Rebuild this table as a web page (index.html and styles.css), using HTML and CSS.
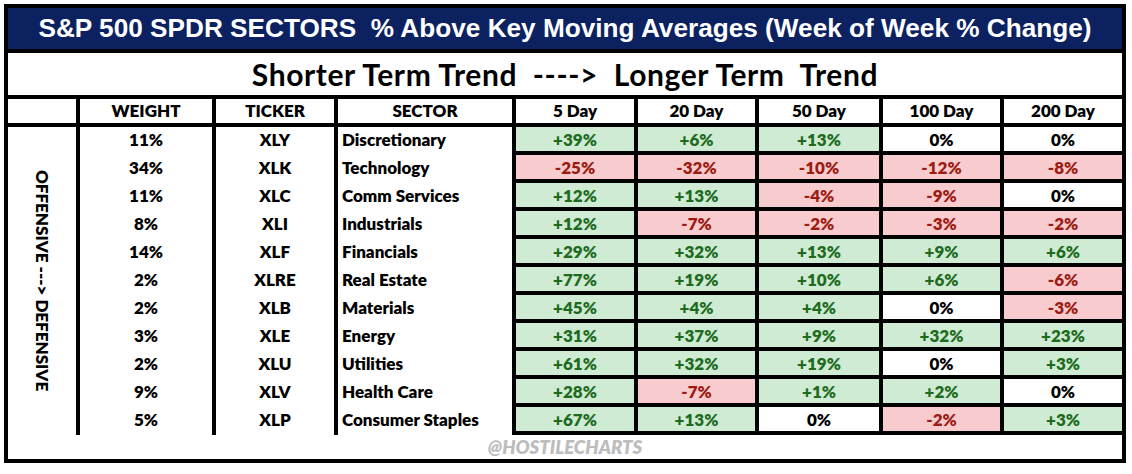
FILE: index.html
```html
<!DOCTYPE html>
<html>
<head>
<meta charset="utf-8">
<link rel="stylesheet" href="styles.css">
</head>
<body>
<div class="board">
  <div class="title">S&amp;P 500 SPDR SECTORS&nbsp; % Above Key Moving Averages (Week of Week % Change)</div>
  <div class="subtitle">Shorter Term Trend&nbsp; ----&gt;&nbsp; Longer Term&nbsp; Trend</div>
  <div class="grid">
    <div class="hd"></div>
    <div class="hd">WEIGHT</div>
    <div class="hd">TICKER</div>
    <div class="hd">SECTOR</div>
    <div class="hd">5 Day</div>
    <div class="hd">20 Day</div>
    <div class="hd">50 Day</div>
    <div class="hd">100 Day</div>
    <div class="hd">200 Day</div>

    <div class="side"><span>OFFENSIVE ---&gt; DEFENSIVE</span></div>

    <div class="c">11%</div><div class="c">XLY</div><div class="c sec">Discretionary</div>
    <div class="v up">+39%</div><div class="v up">+6%</div><div class="v up">+13%</div><div class="v">0%</div><div class="v">0%</div>

    <div class="c">34%</div><div class="c">XLK</div><div class="c sec">Technology</div>
    <div class="v dn">-25%</div><div class="v dn">-32%</div><div class="v dn">-10%</div><div class="v dn">-12%</div><div class="v dn">-8%</div>

    <div class="c">11%</div><div class="c">XLC</div><div class="c sec">Comm Services</div>
    <div class="v up">+12%</div><div class="v up">+13%</div><div class="v dn">-4%</div><div class="v dn">-9%</div><div class="v">0%</div>

    <div class="c">8%</div><div class="c">XLI</div><div class="c sec">Industrials</div>
    <div class="v up">+12%</div><div class="v dn">-7%</div><div class="v dn">-2%</div><div class="v dn">-3%</div><div class="v dn">-2%</div>

    <div class="c">14%</div><div class="c">XLF</div><div class="c sec">Financials</div>
    <div class="v up">+29%</div><div class="v up">+32%</div><div class="v up">+13%</div><div class="v up">+9%</div><div class="v up">+6%</div>

    <div class="c">2%</div><div class="c">XLRE</div><div class="c sec">Real Estate</div>
    <div class="v up">+77%</div><div class="v up">+19%</div><div class="v up">+10%</div><div class="v up">+6%</div><div class="v dn">-6%</div>

    <div class="c">2%</div><div class="c">XLB</div><div class="c sec">Materials</div>
    <div class="v up">+45%</div><div class="v up">+4%</div><div class="v up">+4%</div><div class="v">0%</div><div class="v dn">-3%</div>

    <div class="c">3%</div><div class="c">XLE</div><div class="c sec">Energy</div>
    <div class="v up">+31%</div><div class="v up">+37%</div><div class="v up">+9%</div><div class="v up">+32%</div><div class="v up">+23%</div>

    <div class="c">2%</div><div class="c">XLU</div><div class="c sec">Utilities</div>
    <div class="v up">+61%</div><div class="v up">+32%</div><div class="v up">+19%</div><div class="v">0%</div><div class="v up">+3%</div>

    <div class="c">9%</div><div class="c">XLV</div><div class="c sec">Health Care</div>
    <div class="v up">+28%</div><div class="v dn">-7%</div><div class="v up">+1%</div><div class="v up">+2%</div><div class="v">0%</div>

    <div class="c">5%</div><div class="c">XLP</div><div class="c sec">Consumer Staples</div>
    <div class="v up">+67%</div><div class="v up">+13%</div><div class="v">0%</div><div class="v dn">-2%</div><div class="v up">+3%</div>
  </div>
  <div class="footer">@HOSTILECHARTS</div>
</div>
</body>
</html>
```

FILE: styles.css
```css
* { box-sizing: border-box; }
html, body { margin: 0; padding: 0; background: #ffffff; }
body { padding: 4px 6px 11px 4px; }

.board {
  width: 1122px;
  border: 4px solid #000;
  background: #000;
  font-family: Lato, "Noto Sans", sans-serif;
  font-weight: 800;
  color: #000;
}

.title {
  height: 41px;
  background: #0c2260;
  color: #fff;
  font-family: "Liberation Sans", Arial, sans-serif;
  font-weight: 700;
  font-size: 26.2px;
  line-height: 41px;
  text-align: center;
  margin-bottom: 4px;
  white-space: nowrap;
}

.subtitle {
  height: 42px;
  background: #fff;
  font-size: 30px;
  font-weight: 700;
  letter-spacing: 0.6px;
  line-height: 42px;
  text-align: center;
  margin-bottom: 4px;
  white-space: nowrap;
}

.grid {
  display: grid;
  grid-template-columns: 68px 132px 118px 174px 118px 117px 120px 117px 118px;
  grid-auto-rows: 28px;
  column-gap: 4px;
  background: #000;
}

.hd {
  height: 24px;
  background: #fff;
  font-size: 17px;
  line-height: 24px;
  text-align: center;
}

.side {
  grid-row: span 11;
  background: #fff;
  display: flex;
  align-items: center;
  justify-content: center;
}
.side span {
  writing-mode: vertical-rl;
  font-size: 17px;
  white-space: nowrap;
}

.c {
  background: #fff;
  font-size: 17px;
  line-height: 25px;
  text-align: center;
}
.c.sec { text-align: left; padding-left: 4px; }

.v {
  height: 24px;
  background: #fff;
  font-size: 17px;
  line-height: 25px;
  text-align: center;
}
.v.up { background: #cfebd3; color: #1e6b1e; }
.v.dn { background: #f8cbcf; color: #9c1c12; }

.footer {
  height: 24px;
  background: #fff;
  color: #bdbdbd;
  font-style: italic;
  font-size: 18.5px;
  line-height: 24px;
  text-align: center;
}
```
